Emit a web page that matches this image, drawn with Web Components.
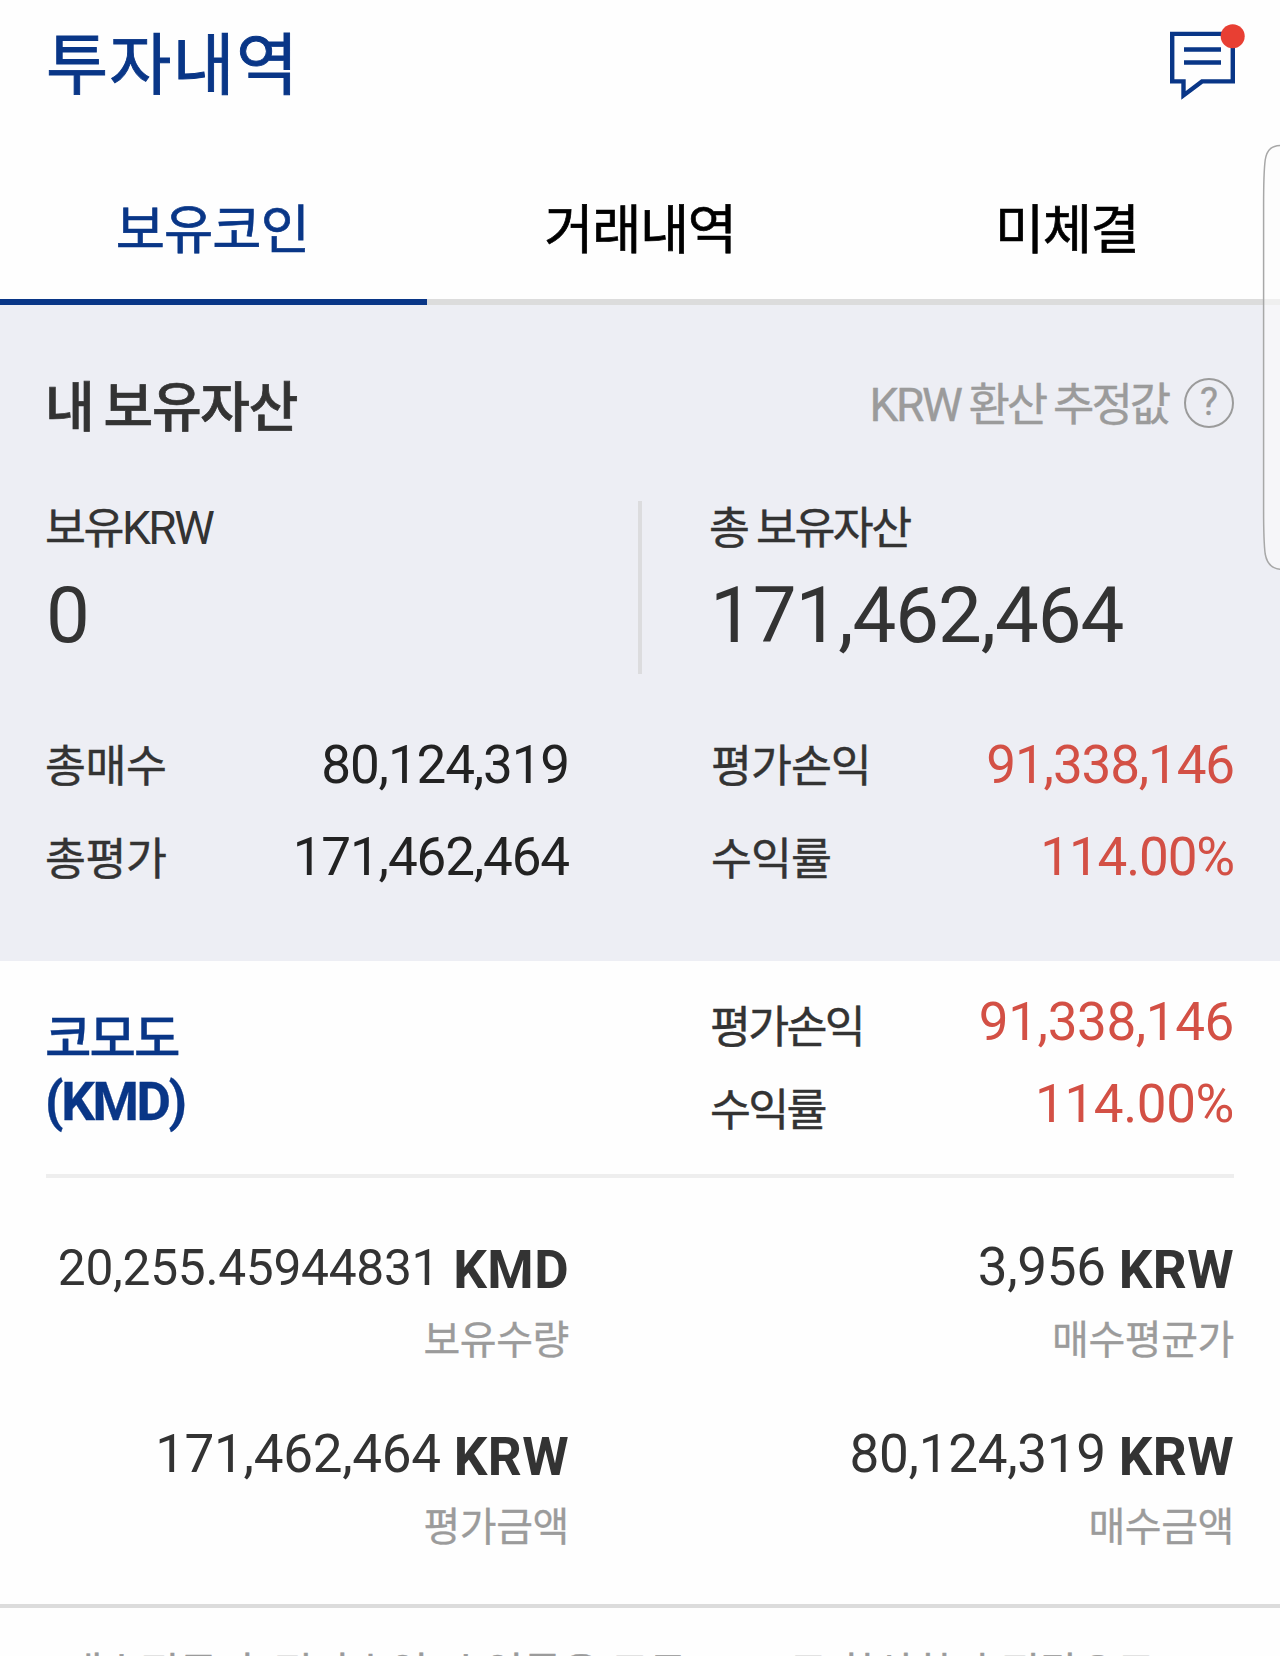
<!DOCTYPE html>
<html lang="ko">
<head>
<meta charset="utf-8">
<title>투자내역</title>
<style>
    body {
        margin: 0;
        width: 1280px;
        height: 1656px;
        overflow: hidden;
        background: #fefefe;
        color: #333;
        font-family: Roboto, "Noto Sans CJK KR", sans-serif;
        line-height: 1.2;
    }
</style>
</head>
<body>
<investment-page></investment-page>

<script>
class BaseElement extends HTMLElement {
    constructor() {
        super()
        this.attachShadow({ mode: 'open' })

        const template = document.createElement('template')
        template.innerHTML = this.constructor.markup
        this.shadowRoot.appendChild(template.content.cloneNode(true))
    }
}

class PageHeader extends BaseElement {
    static markup = `
        <style>
            :host {
                display: flex;
                justify-content: space-between;
                align-items: flex-start;
                height: 163px;
                padding: 0 32px 0 46px;
                box-sizing: border-box;
                color: #093687;
            }
            h1 {
                margin: 0;
                font-size: 67.5px;
                font-weight: 400;
                line-height: 132px;
                letter-spacing: 1.2px;
                -webkit-text-stroke: 0.9px;
            }
            svg {
                display: block;
                margin-top: 22px;
            }
        </style>
        <h1><slot></slot></h1>
        <svg width="80" height="82" viewBox="0 0 80 82" fill="none" stroke="#093687" stroke-width="4.4">
            <path d="M34 59.4H64.8V11.9H4.2V59.4H15.5V73.4Z" stroke-miterlimit="10"/>
            <path d="M16 27.5H53M16 40.5H53" stroke-width="4.4"/>
            <circle cx="64.7" cy="14.2" r="12" fill="#e83f33" stroke="none"/>
        </svg>
    `
}

class TabBar extends BaseElement {
    static markup = `
        <style>
            :host {
                display: grid;
                grid-template-columns: repeat(3, 1fr);
                height: 142px;
            }
        </style>
        <slot></slot>
    `
}

class TabItem extends BaseElement {
    static markup = `
        <style>
            :host {
                display: flex;
                align-items: center;
                justify-content: center;
                border-bottom: 6px solid #dcdcdc;
                box-sizing: border-box;
                color: #000;
                font-size: 53.5px;
                letter-spacing: -1.4px;
                -webkit-text-stroke: 0.7px;
            }
            :host([active]) {
                padding-right: 2px;
                border-color: #093687;
                color: #093687;
                letter-spacing: -0.9px;
            }
        </style>
        <slot></slot>
    `
}

class StatRow extends BaseElement {
    static markup = `
        <style>
            :host {
                display: flex;
                align-items: center;
                justify-content: space-between;
                height: 92.8px;
                font-size: 53px;
                letter-spacing: -1.15px;
                color: #222;
            }
            ::slotted([slot="label"]) {
                margin-top: 4px;
                font-size: 44.5px;
                letter-spacing: -0.4px;
                color: #333;
                -webkit-text-stroke: 0.4px;
            }
            :host([gain]) {
                color: #d35045;
            }
            :host([gain]) ::slotted([slot="label"]) {
                margin-left: 1px;
                letter-spacing: -1px;
            }
            :host([coin]) {
                height: 82.8px;
                letter-spacing: -0.4px;
            }
            :host([coin]) ::slotted([slot="label"]) {
                margin-top: 13px;
                letter-spacing: -2.7px;
            }
        </style>
        <slot name="label"></slot>
        <span><slot></slot></span>
    `
}

class BalanceBox extends BaseElement {
    static markup = `
        <style>
            :host {
                display: block;
            }
            .label {
                font-size: 44.5px;
                line-height: 56px;
                letter-spacing: -2.5px;
                -webkit-text-stroke: 0.4px;
            }
            .value {
                margin: 1px 0 0 1px;
                font-size: 78px;
                line-height: 116px;
                letter-spacing: -1.1px;
            }
            ::slotted(.latin) {
                font-size: 46px;
                line-height: 1;
                -webkit-text-stroke: 0;
            }
        </style>
        <div class="label"><slot name="label"></slot></div>
        <div class="value"><slot></slot></div>
    `
}

class AssetSummary extends BaseElement {
    static markup = `
        <style>
            :host {
                display: block;
                height: 656px;
                padding: 52px 46px 0 45px;
                box-sizing: border-box;
                background: #edeef4;
            }
            header {
                display: flex;
                align-items: center;
                justify-content: space-between;
                height: 100px;
            }
            h2 {
                margin: 5px 0 0;
                font-size: 54px;
                font-weight: 500;
                letter-spacing: -1.3px;
                word-spacing: -2px;
                -webkit-text-stroke: 0.7px;
            }
            .note {
                display: flex;
                align-items: center;
                padding-bottom: 3px;
                font-size: 45px;
                letter-spacing: -3.1px;
                color: #9b9b9b;
                -webkit-text-stroke: 0.4px;
            }
            .note .latin {
                font-size: 46px;
                letter-spacing: -2.4px;
            }
            .help {
                display: flex;
                align-items: center;
                justify-content: center;
                width: 50px;
                height: 50px;
                margin: 0 0 5px 16px;
                border: 2.5px solid #9b9b9b;
                border-radius: 50%;
                box-sizing: border-box;
                font-size: 38px;
                letter-spacing: 0;
            }
            .balances {
                display: grid;
                grid-template-columns: 593px 3.5px 1fr;
                height: 171px;
                margin-top: 44px;
            }
            .divider {
                background: #dcdcde;
            }
            .balances balance-box:last-child {
                padding-left: 67.5px;
            }
            .totals {
                display: grid;
                grid-template-columns: 524px 524px;
                justify-content: space-between;
                margin-top: 47px;
            }
        </style>
        <header>
            <h2>내 보유자산</h2>
            <div class="note">
                <span><span class="latin">KRW</span> 환산 추정값</span>
                <span class="help">?</span>
            </div>
        </header>
        <div class="balances">
            <balance-box><span slot="label">보유</span><span slot="label" class="latin">KRW</span>0</balance-box>
            <div class="divider"></div>
            <balance-box><span slot="label">총 보유자산</span>171,462,464</balance-box>
        </div>
        <div class="totals">
            <stat-row><span slot="label">총매수</span>80,124,319</stat-row>
            <stat-row gain><span slot="label">평가손익</span>91,338,146</stat-row>
            <stat-row><span slot="label">총평가</span>171,462,464</stat-row>
            <stat-row gain><span slot="label">수익률</span>114.00%</stat-row>
        </div>
    `
}

class HoldingValue extends BaseElement {
    static markup = `
        <style>
            :host {
                display: block;
                text-align: right;
            }
            .amount {
                display: flex;
                align-items: center;
                justify-content: flex-end;
                gap: 13px;
                height: 72px;
                font-size: 53px;
            }
            .number {
                padding-bottom: 6px;
                letter-spacing: -0.3px;
            }
            :host([long]) .number {
                padding: 0 1px 5px 0;
                font-size: 49.7px;
            }
            b {
                letter-spacing: 0.4px;
            }
            .label {
                font-size: 40px;
                line-height: 67px;
                letter-spacing: -0.4px;
                color: #9b9b9b;
                -webkit-text-stroke: 0.3px;
            }
        </style>
        <div class="amount">
            <span class="number"><slot></slot></span>
            <b><slot name="unit"></slot></b>
        </div>
        <div class="label"><slot name="label"></slot></div>
    `
}

class CoinCard extends BaseElement {
    static markup = `
        <style>
            :host {
                display: block;
                height: 647px;
                padding: 0 46px 0 45px;
                border-bottom: 4px solid #dcdcdc;
                box-sizing: border-box;
            }
            .head {
                display: grid;
                grid-template-columns: 1fr 525px;
                height: 217px;
                padding-top: 20px;
                margin-left: 1px;
                border-bottom: 4px solid #eee;
                box-sizing: border-box;
            }
            .name {
                margin: 26.5px 0 0 -1px;
                color: #093687;
                font-size: 50.5px;
                font-weight: 500;
                line-height: 62.5px;
                letter-spacing: -2px;
                -webkit-text-stroke: 0.3px;
            }
            .name b {
                display: block;
                padding-top: 1px;
                font-size: 53px;
                letter-spacing: -2.4px;
            }
            .values {
                display: grid;
                grid-template-columns: 524px 524px;
                justify-content: space-between;
                row-gap: 47.7px;
                padding-top: 57px;
            }
        </style>
        <div class="head">
            <div class="name">코모도<b>(KMD)</b></div>
            <div>
                <stat-row gain coin><span slot="label">평가손익</span>91,338,146</stat-row>
                <stat-row gain coin><span slot="label">수익률</span>114.00%</stat-row>
            </div>
        </div>
        <div class="values">
            <holding-value long>20,255.45944831<span slot="unit">KMD</span><span slot="label">보유수량</span></holding-value>
            <holding-value>3,956<span slot="unit">KRW</span><span slot="label">매수평균가</span></holding-value>
            <holding-value>171,462,464<span slot="unit">KRW</span><span slot="label">평가금액</span></holding-value>
            <holding-value>80,124,319<span slot="unit">KRW</span><span slot="label">매수금액</span></holding-value>
        </div>
    `
}

class PageNotice extends BaseElement {
    static markup = `
        <style>
            :host {
                display: block;
                padding: 36px 0 0 46px;
                font-size: 42px;
                line-height: 60px;
                letter-spacing: -0.2px;
                white-space: nowrap;
                color: #9b9b9b;
                -webkit-text-stroke: 0.4px;
            }
            ::slotted(.latin) {
                font-size: 45px;
                line-height: 1;
                letter-spacing: -1.5px;
                -webkit-text-stroke: 0;
            }
        </style>
        <slot></slot>
    `
}

// Edge panel handle that floats over the right side of the screen
class EdgeHandle extends BaseElement {
    static markup = `
        <style>
            :host {
                position: absolute;
                top: 144px;
                left: 1262px;
                width: 18px;
                height: 427px;
            }
            svg {
                display: block;
            }
        </style>
        <svg width="18" height="427" viewBox="0 0 18 427">
            <path d="M20 1.5C10 1.5 5 5 3.2 16C2 25 1.6 40 1.6 62V366C1.6 388 2 401 3.2 410C5 420 10 425.3 20 425.3"
                fill="#fcfcfc" fill-opacity="0.6" stroke="#a8a8a8" stroke-width="1.5"/>
        </svg>
    `
}

class InvestmentPage extends BaseElement {
    static markup = `
        <style>
            :host {
                display: block;
                position: relative;
                height: 1656px;
                overflow: hidden;
            }
        </style>
        <page-header>투자내역</page-header>
        <tab-bar>
            <tab-item active>보유코인</tab-item>
            <tab-item>거래내역</tab-item>
            <tab-item>미체결</tab-item>
        </tab-bar>
        <asset-summary></asset-summary>
        <coin-card></coin-card>
        <page-notice><span class="latin">*</span>매수평균가, 평가손익, 수익률은 모두 <span class="latin">KRW</span>로 환산한 추정값으로</page-notice>
        <edge-handle></edge-handle>
    `
}

customElements.define('page-header', PageHeader)
customElements.define('tab-bar', TabBar)
customElements.define('tab-item', TabItem)
customElements.define('stat-row', StatRow)
customElements.define('balance-box', BalanceBox)
customElements.define('asset-summary', AssetSummary)
customElements.define('holding-value', HoldingValue)
customElements.define('coin-card', CoinCard)
customElements.define('page-notice', PageNotice)
customElements.define('edge-handle', EdgeHandle)
customElements.define('investment-page', InvestmentPage)
</script>
</body>
</html>
